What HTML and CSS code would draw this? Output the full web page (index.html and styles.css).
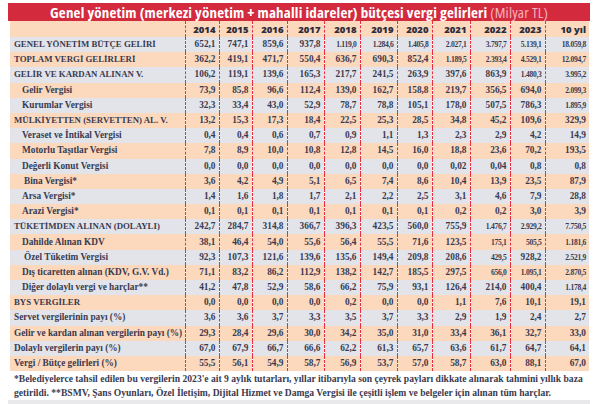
FILE: index.html
```html
<!DOCTYPE html>
<html lang="tr">
<head>
<meta charset="utf-8">
<title>Genel yönetim bütçesi vergi gelirleri</title>
<link rel="stylesheet" href="styles.css">
</head>
<body>
<div class="page">
  <h1 class="title"><b>Genel yönetim (merkezi yönetim + mahalli idareler) bütçesi vergi gelirleri</b> <span class="unit">(Milyar TL)</span></h1>
  <table class="data">
    <colgroup>
      <col class="c-label"><col class="c34"><col class="c33"><col class="c35"><col class="c37"><col class="c36"><col class="c37"><col class="c35"><col class="c38"><col class="c40"><col class="c35"><col class="c44">
    </colgroup>
    <thead>
      <tr><th></th><th>2014</th><th>2015</th><th>2016</th><th>2017</th><th>2018</th><th>2019</th><th>2020</th><th>2021</th><th>2022</th><th>2023</th><th>10 yıl</th></tr>
    </thead>
    <tbody>
      <tr><td class="up">GENEL YÖNETİM BÜTÇE GELİRİ</td><td>652,1</td><td>747,1</td><td>859,6</td><td>937,8</td><td class="s">1.119,0</td><td class="s">1.284,6</td><td class="s">1.405,8</td><td class="s">2.027,1</td><td class="s">3.797,7</td><td class="s">5.139,1</td><td class="s">18.059,8</td></tr>
      <tr><td class="up">TOPLAM VERGİ GELİRLERİ</td><td>362,2</td><td>419,1</td><td>471,7</td><td>550,4</td><td>636,7</td><td>690,3</td><td>852,4</td><td class="s">1.189,5</td><td class="s">2.393,4</td><td class="s">4.529,1</td><td class="s">12.094,7</td></tr>
      <tr><td class="up">GELİR VE KARDAN ALINAN V.</td><td>106,2</td><td>119,1</td><td>139,6</td><td>165,3</td><td>217,7</td><td>241,5</td><td>263,9</td><td>397,6</td><td>863,9</td><td class="s">1.480,3</td><td class="s">3.995,2</td></tr>
      <tr><td class="sub">Gelir Vergisi</td><td>73,9</td><td>85,8</td><td>96,6</td><td>112,4</td><td>139,0</td><td>162,7</td><td>158,8</td><td>219,7</td><td>356,5</td><td>694,0</td><td class="s">2.099,3</td></tr>
      <tr><td class="sub">Kurumlar Vergisi</td><td>32,3</td><td>33,4</td><td>43,0</td><td>52,9</td><td>78,7</td><td>78,8</td><td>105,1</td><td>178,0</td><td>507,5</td><td>786,3</td><td class="s">1.895,9</td></tr>
      <tr><td class="up">MÜLKİYETTEN (SERVETTEN) AL. V.</td><td>13,2</td><td>15,3</td><td>17,3</td><td>18,4</td><td>22,5</td><td>25,3</td><td>28,5</td><td>34,8</td><td>45,2</td><td>109,6</td><td>329,9</td></tr>
      <tr><td class="sub">Veraset ve İntikal Vergisi</td><td>0,4</td><td>0,4</td><td>0,6</td><td>0,7</td><td>0,9</td><td>1,1</td><td>1,3</td><td>2,3</td><td>2,9</td><td>4,2</td><td>14,9</td></tr>
      <tr><td class="sub">Motorlu Taşıtlar Vergisi</td><td>7,8</td><td>8,9</td><td>10,0</td><td>10,8</td><td>12,8</td><td>14,5</td><td>16,0</td><td>18,8</td><td>23,6</td><td>70,2</td><td>193,5</td></tr>
      <tr><td class="sub">Değerli Konut Vergisi</td><td>0,0</td><td>0,0</td><td>0,0</td><td>0,0</td><td>0,0</td><td>0,0</td><td>0,0</td><td>0,02</td><td>0,04</td><td>0,8</td><td>0,8</td></tr>
      <tr><td class="sub deep">Bina Vergisi*</td><td>3,6</td><td>4,2</td><td>4,9</td><td>5,1</td><td>6,5</td><td>7,4</td><td>8,6</td><td>10,4</td><td>13,9</td><td>23,5</td><td>87,9</td></tr>
      <tr><td class="sub">Arsa Vergisi*</td><td>1,4</td><td>1,6</td><td>1,8</td><td>1,7</td><td>2,1</td><td>2,2</td><td>2,5</td><td>3,1</td><td>4,6</td><td>7,9</td><td>28,8</td></tr>
      <tr><td class="sub">Arazi Vergisi*</td><td>0,1</td><td>0,1</td><td>0,1</td><td>0,1</td><td>0,1</td><td>0,1</td><td>0,1</td><td>0,2</td><td>0,2</td><td>3,0</td><td>3,9</td></tr>
      <tr><td class="up">TÜKETİMDEN ALINAN (DOLAYLI)</td><td>242,7</td><td>284,7</td><td>314,8</td><td>366,7</td><td>396,3</td><td>423,5</td><td>560,0</td><td>755,9</td><td class="s">1.476,7</td><td class="s">2.929,2</td><td class="s">7.750,5</td></tr>
      <tr><td class="sub">Dahilde Alınan KDV</td><td>38,1</td><td>46,4</td><td>54,0</td><td>55,6</td><td>56,4</td><td>55,5</td><td>71,6</td><td>123,5</td><td class="s">175,1</td><td class="s">505,5</td><td class="s">1.181,6</td></tr>
      <tr><td class="sub deep">Özel Tüketim Vergisi</td><td>92,3</td><td>107,3</td><td>121,6</td><td>139,6</td><td>135,6</td><td>149,4</td><td>209,8</td><td>208,6</td><td class="s">429,5</td><td>928,2</td><td class="s">2.521,9</td></tr>
      <tr><td class="sub">Dış ticaretten alınan (KDV, G.V. Vd.)</td><td>71,1</td><td>83,2</td><td>86,2</td><td>112,9</td><td>138,2</td><td>142,7</td><td>185,5</td><td>297,5</td><td class="s">656,0</td><td class="s">1.095,1</td><td class="s">2.870,5</td></tr>
      <tr><td class="sub">Diğer dolaylı vergi ve harçlar**</td><td>41,2</td><td>47,8</td><td>52,9</td><td>58,6</td><td>66,2</td><td>75,9</td><td>93,1</td><td>126,4</td><td>214,0</td><td>400,4</td><td class="s">1.178,4</td></tr>
      <tr><td class="up">BYS VERGİLER</td><td>0,0</td><td>0,0</td><td>0,0</td><td>0,0</td><td>0,2</td><td>0,0</td><td>0,0</td><td>1,1</td><td>7,6</td><td>10,1</td><td>19,1</td></tr>
      <tr><td>Servet vergilerinin payı (%)</td><td>3,6</td><td>3,6</td><td>3,7</td><td>3,3</td><td>3,5</td><td>3,7</td><td>3,3</td><td>2,9</td><td>1,9</td><td>2,4</td><td>2,7</td></tr>
      <tr><td>Gelir ve kardan alınan vergilerin payı (%)</td><td>29,3</td><td>28,4</td><td>29,6</td><td>30,0</td><td>34,2</td><td>35,0</td><td>31,0</td><td>33,4</td><td>36,1</td><td>32,7</td><td>33,0</td></tr>
      <tr><td>Dolaylı vergilerin payı (%)</td><td>67,0</td><td>67,9</td><td>66,7</td><td>66,6</td><td>62,2</td><td>61,3</td><td>65,7</td><td>63,6</td><td>61,7</td><td>64,7</td><td>64,1</td></tr>
      <tr><td>Vergi / Bütçe gelirleri (%)</td><td>55,5</td><td>56,1</td><td>54,9</td><td>58,7</td><td>56,9</td><td>53,7</td><td>57,0</td><td>58,7</td><td>63,0</td><td>88,1</td><td>67,0</td></tr>
    </tbody>
  </table>
  <p class="note">*Belediyelerce tahsil edilen bu vergilerin 2023'e ait 9 aylık tutarları, yıllar itibarıyla son çeyrek payları dikkate alınarak tahmini yıllık baza getirildi. **BSMV, Şans Oyunları, Özel İletişim, Dijital Hizmet ve Damga Vergisi ile çeşitli işlem ve belgeler için alınan tüm harçlar.</p>
  <div class="bottom"></div>
</div>
</body>
</html>
```

FILE: styles.css
```css
html, body {
  margin: 0;
  padding: 0;
  background: #ffffff;
}
.page {
  width: 582px;
  margin-left: 8px;
  padding-top: 3px;
}
.title {
  margin: 0;
  height: 18px;
  background: #d42a3e;
  color: #ffffff;
  font-family: "Open Sans", sans-serif;
  font-size: 15px;
  line-height: 18px;
  font-weight: 700;
  font-stretch: 75%;
  letter-spacing: 0.2px;
  text-align: center;
  white-space: nowrap;
}
.title b { font-weight: 700; }
.title .unit {
  font-weight: 400;
  color: #f4b3bb;
}
.data {
  margin-left: 2px;
  width: 579px;
  border-collapse: collapse;
  table-layout: fixed;
  color: #3a3b50;
  font-family: "Liberation Serif", serif;
  font-weight: 700;
}
.c-label { width: 175px; }
.c33 { width: 33px; }
.c34 { width: 34px; }
.c35 { width: 35px; }
.c36 { width: 36px; }
.c37 { width: 37px; }
.c38 { width: 38px; }
.c40 { width: 40px; }
.c44 { width: 44px; }
.data th, .data td {
  padding: 0 3px 0 0;
  text-align: right;
  white-space: nowrap;
  overflow: hidden;
}
.data th + th, .data td + td {
  border-left: 1px dashed #e5303f;
}
.data thead tr {
  background: #fcd8bc;
}
.data th {
  height: 16px;
  font-family: "Open Sans", sans-serif;
  font-size: 9.5px;
  font-weight: 800;
  color: #2c2c3c;
}
.data tbody tr {
  height: 15.2px;
}
.data tbody tr:nth-child(odd) { background: #e3e4ea; }
.data tbody tr:nth-child(even) { background: #fcd8bc; }
.data td {
  font-size: 9.3px;
  line-height: 15px;
}
.data td.s {
  font-size: 7.6px;
  letter-spacing: -0.3px;
}
.data td:first-child {
  text-align: left;
  padding-left: 4px;
  font-size: 9.3px;
}
.data td.up { font-size: 8.8px; }
.data td.sub { padding-left: 12px; }
.data td.deep { padding-left: 14px; }
.note {
  margin: 0;
  padding: 1px 4px 0 6px;
  font-family: "Liberation Serif", serif;
  font-weight: 700;
  font-size: 9.6px;
  line-height: 14px;
  color: #3a3b50;
}
.bottom {
  height: 10px;
  background: #e9e9ec;
}
```
